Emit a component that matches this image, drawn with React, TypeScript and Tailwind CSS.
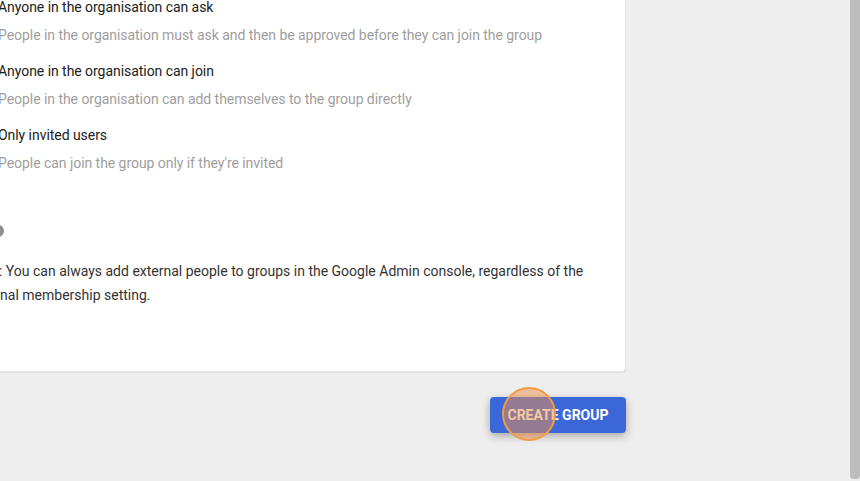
import React from 'react';

const options = [
  {
    title: 'Anyone in the organisation can ask',
    desc: 'People in the organisation must ask and then be approved before they can join the group',
  },
  {
    title: 'Anyone in the organisation can join',
    desc: 'People in the organisation can add themselves to the group directly',
  },
  {
    title: 'Only invited users',
    desc: "People can join the group only if they're invited",
  },
];

const App = () => {
  return (
    <div className="w-[860px] h-[481px] bg-[#eeeeee] flex overflow-hidden font-['Roboto',sans-serif]">
      {/* Main content */}
      <div className="w-[850px] h-full overflow-hidden">
        {/* Card */}
        <div className="ml-[-57px] -mt-[40px] w-[683px] bg-white rounded-sm border border-[#e3e3e3] shadow-[0_1px_1px_rgba(0,0,0,0.06)] px-6 pt-[36px] pb-[64px]">
          {/* Membership options */}
          <div className="flex flex-col gap-4 pl-[30px] tracking-[-0.05px]">
            {options.map((o) => (
              <div key={o.title} className="flex flex-col gap-2">
                <div className="text-[14px] leading-5 text-[#212121]">{o.title}</div>
                <div className="text-[14px] leading-5 text-[#9e9e9e]">{o.desc}</div>
              </div>
            ))}
          </div>

          {/* Toggle thumb */}
          <div className="mt-[52px] ml-6 h-3 w-3 rounded-full bg-[#8f8f8f]" />

          {/* Note */}
          <p className="mt-[22px] ml-px text-[14px] leading-6 text-[#333333]">
            Note: You can always add external people to groups in the Google Admin console, regardless of the external membership setting.
          </p>
        </div>

        {/* Actions */}
        <div className="w-[626px] flex justify-end mt-[25px]">
          <div className="relative">
            <button className="h-9 w-[136px] rounded-sm bg-[#3b67d8] text-white text-[14px] font-bold shadow-[0_3px_8px_rgba(0,0,0,0.3)]">
              CREATE GROUP
            </button>
            <div className="absolute left-[12px] top-[-10px] h-[54px] w-[54px] rounded-full border-2 border-[#f39a45] bg-[#f0904a]/50 pointer-events-none" />
          </div>
        </div>
      </div>

      {/* Scrollbar */}
      <div className="w-[10px] h-full bg-[#eeeeee]">
        <div className="w-[10px] h-[479px] bg-[#bdbdbd] rounded-b-[4px]" />
      </div>
    </div>
  );
};

export default App;
